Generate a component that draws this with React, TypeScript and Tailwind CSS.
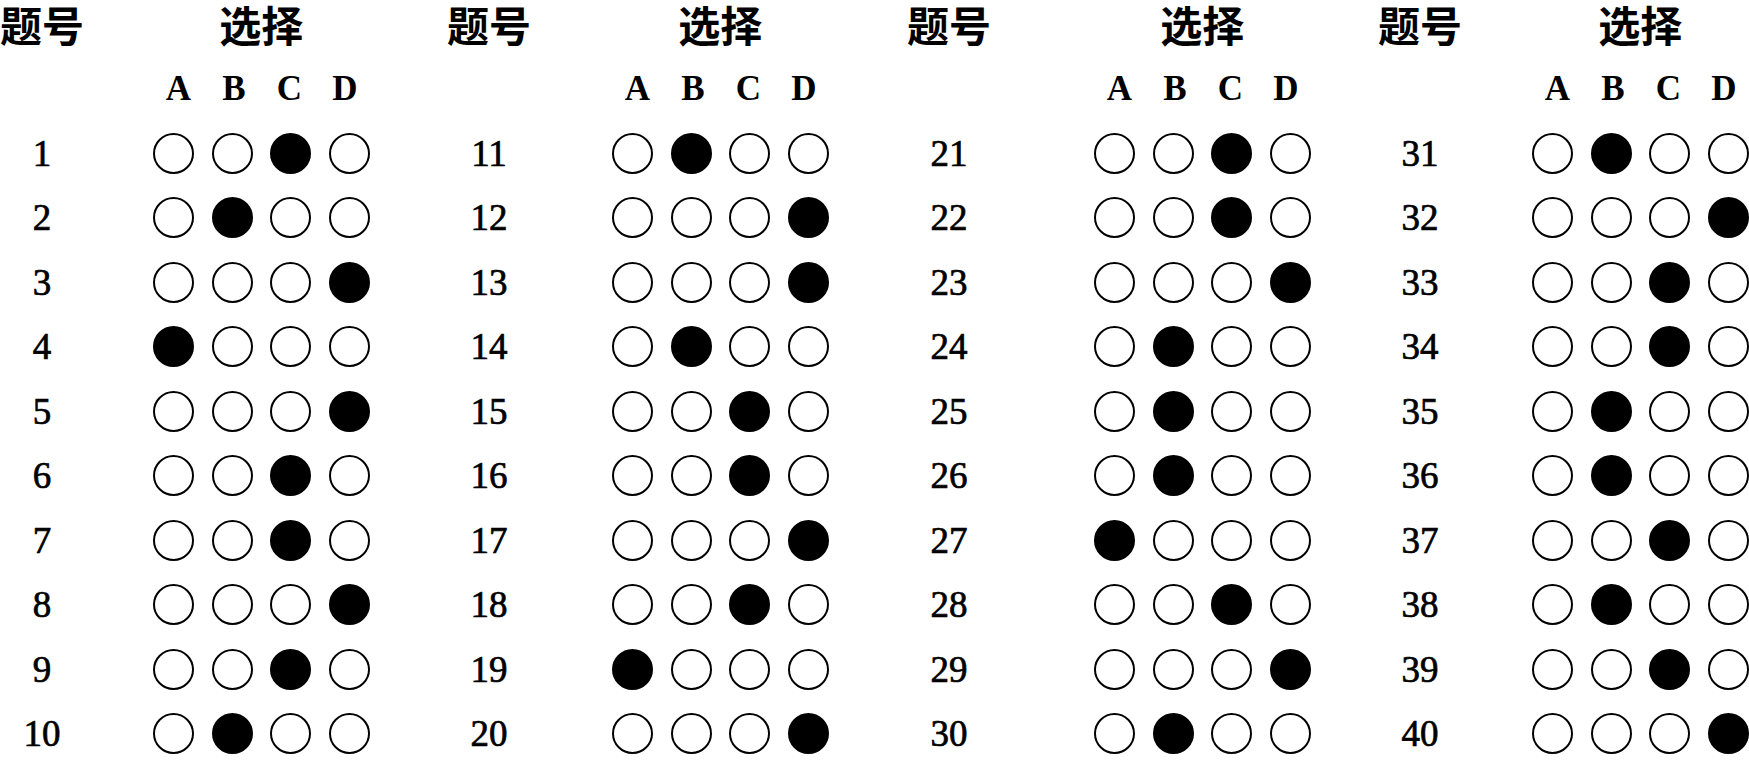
const OPTS = ["A", "B", "C", "D"] as const;

type Group = {
  start: number;
  answers: string;
  width: string;
  gap: string;
};

// 每栏的宽度和题号到选项的间距按原图量出来
const GROUPS: Group[] = [
  { start: 1, answers: "CBDADCCDCB", width: "w-[447px]", gap: "gap-[69px]" },
  { start: 11, answers: "BDDBCCDCAD", width: "w-[460px]", gap: "gap-[81px]" },
  { start: 21, answers: "CCDBBBACDB", width: "w-[471px]", gap: "gap-[103px]" },
  { start: 31, answers: "BDCCBBCBCD", width: "flex-1", gap: "gap-[70px]" },
];

const cjk = { fontFamily: '"Noto Sans CJK SC", "Noto Sans", sans-serif' };
const serif = { fontFamily: '"Liberation Serif", "Times New Roman", serif' };

function Bubble({ filled }: { filled: boolean }) {
  return (
    <span
      className={`block w-[41px] h-[41px] rounded-full border-[2.5px] border-black ${filled ? "bg-black" : "bg-white"}`}
    />
  );
}

function AnswerGroup({ group }: { group: Group }) {
  return (
    <div className={`${group.width} shrink-0 flex ${group.gap}`}>
      {/* 题号列 */}
      <div className="w-[84px] flex flex-col">
        <div className="h-[48px] flex items-center justify-center text-[42px] font-semibold text-black leading-[48px] whitespace-nowrap" style={cjk}>
          题号
        </div>
        <div className="h-[74px]" />
        {group.answers.split("").map((_, i) => (
          <div
            key={i}
            className="h-[65.5px] flex items-center justify-center text-[37px] text-black leading-none [-webkit-text-stroke:0.7px_black]"
            style={serif}
          >
            {group.start + i}
          </div>
        ))}
      </div>

      {/* 选择列 */}
      <div className="w-[216.5px] flex flex-col">
        <div className="h-[48px] flex items-center justify-center text-[42px] font-semibold text-black leading-[48px] whitespace-nowrap" style={cjk}>
          选择
        </div>
        <div className="h-[74px] pt-[8px] pl-[5px] flex items-center gap-[14.5px]">
          {OPTS.map((o) => (
            <span key={o} className="w-[41px] text-center text-[35px] font-bold text-black leading-none" style={serif}>
              {o}
            </span>
          ))}
        </div>
        {group.answers.split("").map((ans, i) => (
          <div key={i} className="h-[65.5px] flex items-center gap-[17.5px]">
            {OPTS.map((o) => (
              <Bubble key={o} filled={o === ans} />
            ))}
          </div>
        ))}
      </div>
    </div>
  );
}

export default function App() {
  return (
    <div className="w-[1749px] h-[766px] bg-white overflow-hidden flex">
      {GROUPS.map((g) => (
        <AnswerGroup key={g.start} group={g} />
      ))}
    </div>
  );
}
